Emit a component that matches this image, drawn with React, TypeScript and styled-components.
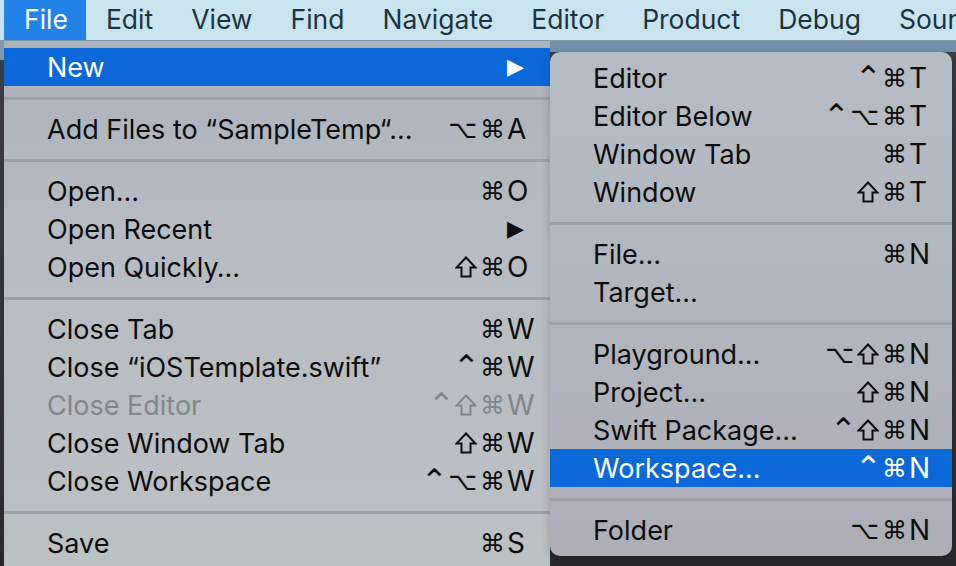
import styled, { createGlobalStyle } from 'styled-components'

const GlobalStyle = createGlobalStyle`
  html, body {
    margin: 0;
    padding: 0;
    width: 956px;
    height: 566px;
    overflow: hidden;
  }
  body {
    font-family: 'Inter', 'Noto Sans', sans-serif;
  }
`

const colors = {
  bar: '#c9e4ef',
  barText: '#1b3440',
  barActive: '#2182e8',
  text: '#0e0e0e',
  disabled: '#81878c',
  highlight: '#0b68d9',
  sep: '#9ca2a8',
}

type Entry =
  | 'sep'
  | {
      label: string
      mods?: string
      keyChar?: string
      arrow?: boolean
      disabled?: boolean
      active?: boolean
    }

const mainItems: Entry[] = [
  { label: 'New', arrow: true, active: true },
  'sep',
  { label: 'Add Files to \u201cSampleTemp\u201c\u2026', mods: '⌥⌘', keyChar: 'A' },
  'sep',
  { label: 'Open\u2026', mods: '⌘', keyChar: 'O' },
  { label: 'Open Recent', arrow: true },
  { label: 'Open Quickly\u2026', mods: '⇧⌘', keyChar: 'O' },
  'sep',
  { label: 'Close Tab', mods: '⌘', keyChar: 'W' },
  { label: 'Close \u201ciOSTemplate.swift\u201d', mods: '⌃⌘', keyChar: 'W' },
  { label: 'Close Editor', mods: '⌃⇧⌘', keyChar: 'W', disabled: true },
  { label: 'Close Window Tab', mods: '⇧⌘', keyChar: 'W' },
  { label: 'Close Workspace', mods: '⌃⌥⌘', keyChar: 'W' },
  'sep',
  { label: 'Save', mods: '⌘', keyChar: 'S' },
]

const subItems: Entry[] = [
  { label: 'Editor', mods: '⌃⌘', keyChar: 'T' },
  { label: 'Editor Below', mods: '⌃⌥⌘', keyChar: 'T' },
  { label: 'Window Tab', mods: '⌘', keyChar: 'T' },
  { label: 'Window', mods: '⇧⌘', keyChar: 'T' },
  'sep',
  { label: 'File\u2026', mods: '⌘', keyChar: 'N' },
  { label: 'Target\u2026' },
  'sep',
  { label: 'Playground\u2026', mods: '⌥⇧⌘', keyChar: 'N' },
  { label: 'Project\u2026', mods: '⇧⌘', keyChar: 'N' },
  { label: 'Swift Package\u2026', mods: '⌃⇧⌘', keyChar: 'N' },
  { label: 'Workspace\u2026', mods: '⌃⌘', keyChar: 'N', active: true },
  'sep',
  { label: 'Folder', mods: '⌥⌘', keyChar: 'N' },
]

const barItems = ['File', 'Edit', 'View', 'Find', 'Navigate', 'Editor', 'Product', 'Debug', 'Source Control']

const Desktop = styled.div`
  position: relative;
  width: 956px;
  height: 566px;
  overflow: hidden;
  background:
    linear-gradient(90deg, #8399ad 0 4px, transparent 4px) top left / 100% 60px no-repeat,
    linear-gradient(180deg, #7290ab 0 52px, #3b3d42 52px, #2a2a2d 100%);
`

const MenuBar = styled.div`
  display: flex;
  height: 40px;
  padding-left: 4px;
  background: ${colors.bar};
  border-bottom: 1px solid #7f98a8;
  white-space: nowrap;
`

const BarItem = styled.div<{ $active?: boolean }>`
  display: flex;
  align-items: center;
  padding: 0 18px 2px 20px;
  font-size: 26.5px;
  color: ${(p) => (p.$active ? '#fff' : colors.barText)};
  background: ${(p) => (p.$active ? colors.barActive : 'transparent')};
`

const MainMenu = styled.div`
  position: absolute;
  left: 4px;
  top: 41px;
  width: 546px;
  height: 540px;
  padding-top: 7px;
  box-sizing: border-box;
  background: linear-gradient(180deg, #aab2ba 0%, #b6bcc1 35%, #bcc1c4 100%);
`

const SubMenu = styled.div`
  position: absolute;
  left: 550px;
  top: 52px;
  width: 402px;
  padding: 7px 0;
  border-radius: 10px;
  background: linear-gradient(180deg, #b5bcc3 0%, #b1b6bd 55%, #adadb6 100%);
  box-shadow: 0 3px 10px rgba(0, 0, 0, 0.2);
`

const Row = styled.div<{ $active?: boolean; $disabled?: boolean }>`
  display: flex;
  align-items: center;
  height: 38px;
  padding: 0 10px 0 43px;
  font-size: 27px;
  white-space: nowrap;
  color: ${(p) => (p.$active ? '#fff' : p.$disabled ? colors.disabled : colors.text)};
  background: ${(p) => (p.$active ? colors.highlight : 'transparent')};
`

const Label = styled.span`
  flex: 1;
`

const Mods = styled.span`
  display: flex;
  align-items: center;
  gap: 3px;
  margin-right: 2px;
  font-family: 'DejaVu Sans', sans-serif;
  font-size: 25px;
  line-height: 1;
`

const Caret = styled.span`
  display: inline-block;
  transform: translateY(-1px) scale(1.3);
`

const ShiftIcon = styled.svg`
  width: 22px;
  height: 22px;
`

const KeyChar = styled.span`
  width: 33px;
  text-align: left;
  font-size: 28px;
`

const Arrow = styled.span`
  width: 33px;
  font-family: 'DejaVu Sans', sans-serif;
  font-size: 22px;
  line-height: 1;
`

const Separator = styled.div`
  display: flex;
  align-items: center;
  height: 24px;
  &::after {
    content: '';
    flex: 1;
    height: 3px;
    background: ${colors.sep};
  }
`

function Shift() {
  return (
    <ShiftIcon viewBox="0 0 22 22">
      <path
        d="M11 1.5 L20.5 11.5 H15.5 V20.5 H6.5 V11.5 H1.5 Z"
        fill="none"
        stroke="currentColor"
        strokeWidth="2"
        strokeLinejoin="miter"
      />
    </ShiftIcon>
  )
}

function ModKeys({ mods }: { mods: string }) {
  return (
    <Mods>
      {Array.from(mods).map((m, i) =>
        m === '⇧' ? <Shift key={i} /> : m === '⌃' ? <Caret key={i}>⌃</Caret> : <span key={i}>{m}</span>
      )}
    </Mods>
  )
}

function MenuList({ items }: { items: Entry[] }) {
  return (
    <>
      {items.map((item, i) =>
        item === 'sep' ? (
          <Separator key={i} />
        ) : (
          <Row key={i} $active={item.active} $disabled={item.disabled}>
            <Label>{item.label}</Label>
            {item.mods ? <ModKeys mods={item.mods} /> : null}
            {item.arrow ? <Arrow>▶</Arrow> : <KeyChar>{item.keyChar}</KeyChar>}
          </Row>
        )
      )}
    </>
  )
}

export default function App() {
  return (
    <>
      <GlobalStyle />
      <Desktop>
        <MenuBar>
          {barItems.map((name, i) => (
            <BarItem key={name} $active={i === 0}>
              {name}
            </BarItem>
          ))}
        </MenuBar>
        <MainMenu>
          <MenuList items={mainItems} />
        </MainMenu>
        <SubMenu>
          <MenuList items={subItems} />
        </SubMenu>
      </Desktop>
    </>
  )
}
